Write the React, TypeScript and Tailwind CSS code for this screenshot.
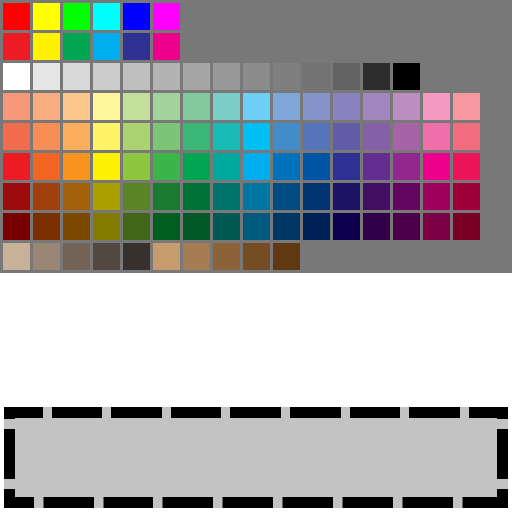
import React from 'react';

const rows: string[][] = [
  ['#ff0000', '#ffff00', '#00ff00', '#00ffff', '#0000ff', '#ff00ff'],
  ['#ed1c24', '#fff200', '#00a651', '#00aeef', '#2e3192', '#ec008c'],
  [
    '#ffffff', '#e6e6e6', '#d9d9d9', '#cccccc', '#bfbfbf', '#b3b3b3', '#a6a6a6',
    '#999999', '#8c8c8c', '#7f7f7f', '#737373', '#636363', '#2d2d2d', '#000000',
  ],
  [
    '#f7977a', '#f9ad81', '#fdc68a', '#fff79a', '#c4df9b', '#a2d39c', '#82ca9d', '#7bcdc8',
    '#6ecff6', '#7ea7d8', '#8493ca', '#8882be', '#a187be', '#bc8dbf', '#f49ac2', '#f6989d',
  ],
  [
    '#f26c4f', '#f68e55', '#fbaf5c', '#fff467', '#acd372', '#7cc576', '#3bb878', '#1abbb4',
    '#00bff3', '#438cca', '#5574b9', '#605ca8', '#855fa8', '#a763a8', '#f06ea9', '#f26d7d',
  ],
  [
    '#ed1c24', '#f26522', '#f7941d', '#fff200', '#8dc73f', '#39b54a', '#00a651', '#00a99d',
    '#00aeef', '#0072bc', '#0054a6', '#2e3192', '#662d91', '#92278f', '#ec008c', '#ed145b',
  ],
  [
    '#9e0b0f', '#a0410d', '#a36209', '#aba000', '#598527', '#1a7b30', '#007236', '#00746b',
    '#0076a3', '#004b80', '#003471', '#1b1464', '#440e62', '#630460', '#9e005d', '#9e0039',
  ],
  [
    '#790000', '#7b2e00', '#7d4900', '#827b00', '#406618', '#005e20', '#005826', '#005952',
    '#005b7f', '#003663', '#002157', '#0d004c', '#32004b', '#4b0049', '#7b0046', '#7a0026',
  ],
  [
    '#c7b299', '#998675', '#736357', '#534741', '#37302d', '#c69c6d', '#a67c52', '#8c6239',
    '#754c24', '#603913',
  ],
];

const topGaps = [39, 98, 158, 217, 277, 337, 396, 456];
const bottomGaps = [30, 90, 149, 209, 269, 329, 389, 449];
const sideGaps = [12, 72];

function DashedFrame() {
  return (
    <svg className="absolute inset-0" width={504} height={101} viewBox="0 0 504 101">
      <rect x={0} y={0} width={504} height={11} fill="#000" />
      <rect x={0} y={90} width={504} height={11} fill="#000" />
      <rect x={0} y={0} width={11} height={101} fill="#000" />
      <rect x={493} y={0} width={11} height={101} fill="#000" />
      {topGaps.map((x) => (
        <rect key={`t${x}`} x={x} y={0} width={9} height={11} fill="#c3c3c3" />
      ))}
      {bottomGaps.map((x) => (
        <rect key={`b${x}`} x={x} y={90} width={9.5} height={11} fill="#c3c3c3" />
      ))}
      {sideGaps.map((y) => (
        <React.Fragment key={`s${y}`}>
          <rect x={0} y={y} width={11} height={10} fill="#c3c3c3" />
          <rect x={493} y={y} width={11} height={10} fill="#c3c3c3" />
        </React.Fragment>
      ))}
    </svg>
  );
}

export default function App() {
  return (
    <div className="w-[512px] h-[512px] bg-white flex flex-col">
      <div className="h-[273px] bg-[#787878] flex flex-col gap-[3px] pt-[3px] pl-[3px]">
        {rows.map((row, i) => (
          <div key={i} className="flex gap-[3px]">
            {row.map((c, j) => (
              <div
                key={j}
                className="w-[27px] h-[27px] shrink-0"
                style={{ backgroundColor: c }}
              />
            ))}
          </div>
        ))}
      </div>
      <div className="mt-[134px] mx-[4px] relative h-[101px] w-[504px] bg-[#c3c3c3]">
        <DashedFrame />
      </div>
    </div>
  );
}
